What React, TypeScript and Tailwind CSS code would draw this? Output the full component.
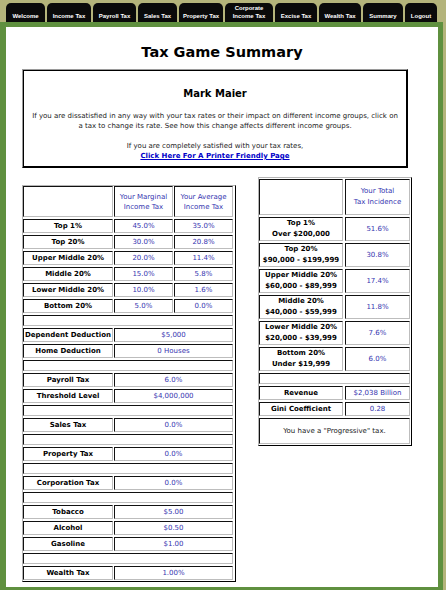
import React from 'react'

type Tab = { label: React.ReactNode; w: string }

const TABS: Tab[] = [
  { label: 'Welcome', w: 'w-[39px]' },
  { label: 'Income Tax', w: 'w-[44px]' },
  { label: 'Payroll Tax', w: 'w-[43px]' },
  { label: 'Sales Tax', w: 'w-[39px]' },
  { label: 'Property Tax', w: 'w-[44px]' },
  {
    label: (
      <>
        Corporate
        <br />
        Income Tax
      </>
    ),
    w: 'w-[48px]',
  },
  { label: 'Excise Tax', w: 'w-[42px]' },
  { label: 'Wealth Tax', w: 'w-[42px]' },
  { label: 'Summary', w: 'w-[40px]' },
  { label: 'Logout', w: 'w-[32px]' },
]

// inset cell like an old border=1 table
const cell =
  'flex items-center justify-center text-center border border-t-[#111] border-l-[#111] border-b-[#bdbdbd] border-r-[#bdbdbd]'
const label = `${cell} font-bold text-black`
const value = `${cell} text-[#3535b0]`

type Row =
  | { kind: 'empty' }
  | { kind: 'income'; name: string; marginal: string; average: string }
  | { kind: 'single'; name: string; val: string }

const LEFT_ROWS: Row[] = [
  { kind: 'income', name: 'Top 1%', marginal: '45.0%', average: '35.0%' },
  { kind: 'income', name: 'Top 20%', marginal: '30.0%', average: '20.8%' },
  { kind: 'income', name: 'Upper Middle 20%', marginal: '20.0%', average: '11.4%' },
  { kind: 'income', name: 'Middle 20%', marginal: '15.0%', average: '5.8%' },
  { kind: 'income', name: 'Lower Middle 20%', marginal: '10.0%', average: '1.6%' },
  { kind: 'income', name: 'Bottom 20%', marginal: '5.0%', average: '0.0%' },
  { kind: 'empty' },
  { kind: 'single', name: 'Dependent Deduction', val: '$5,000' },
  { kind: 'single', name: 'Home Deduction', val: '0 Houses' },
  { kind: 'empty' },
  { kind: 'single', name: 'Payroll Tax', val: '6.0%' },
  { kind: 'single', name: 'Threshold Level', val: '$4,000,000' },
  { kind: 'empty' },
  { kind: 'single', name: 'Sales Tax', val: '0.0%' },
  { kind: 'empty' },
  { kind: 'single', name: 'Property Tax', val: '0.0%' },
  { kind: 'empty' },
  { kind: 'single', name: 'Corporation Tax', val: '0.0%' },
  { kind: 'empty' },
  { kind: 'single', name: 'Tobacco', val: '$5.00' },
  { kind: 'single', name: 'Alcohol', val: '$0.50' },
  { kind: 'single', name: 'Gasoline', val: '$1.00' },
  { kind: 'empty' },
  { kind: 'single', name: 'Wealth Tax', val: '1.00%' },
]

const INCIDENCE = [
  { group: 'Top 1%', range: 'Over $200,000', pct: '51.6%' },
  { group: 'Top 20%', range: '$90,000 - $199,999', pct: '30.8%' },
  { group: 'Upper Middle 20%', range: '$60,000 - $89,999', pct: '17.4%' },
  { group: 'Middle 20%', range: '$40,000 - $59,999', pct: '11.8%' },
  { group: 'Lower Middle 20%', range: '$20,000 - $39,999', pct: '7.6%' },
  { group: 'Bottom 20%', range: 'Under $19,999', pct: '6.0%' },
]

function LeftTable() {
  return (
    <div className="mt-[17px] grid w-[214px] grid-cols-[90px_59px_59px] gap-x-[1px] gap-y-[2px] border border-t-[#b5b5b5] border-l-[#b5b5b5] border-b-black border-r-black pb-[1px] pr-[1px] text-[7px] leading-[10px]">
      <div className={`${cell} h-[31px]`} />
      <div className={`${value} h-[31px]`}>
        Your Marginal
        <br />
        Income Tax
      </div>
      <div className={`${value} h-[31px]`}>
        Your Average
        <br />
        Income Tax
      </div>
      {LEFT_ROWS.map((row, i) => {
        if (row.kind === 'empty') return <div key={i} className={`${cell} col-span-3 h-[11px]`} />
        if (row.kind === 'income')
          return (
            <React.Fragment key={i}>
              <div className={`${label} h-[14px]`}>{row.name}</div>
              <div className={`${value} h-[14px]`}>{row.marginal}</div>
              <div className={`${value} h-[14px]`}>{row.average}</div>
            </React.Fragment>
          )
        return (
          <React.Fragment key={i}>
            <div className={`${label} h-[14px]`}>{row.name}</div>
            <div className={`${value} col-span-2 h-[14px]`}>{row.val}</div>
          </React.Fragment>
        )
      })}
    </div>
  )
}

function RightTable() {
  return (
    <div className="ml-[22px] mt-[9px] grid w-[154px] grid-cols-[84px_65px] gap-[2px] border border-t-[#b5b5b5] border-l-[#b5b5b5] border-b-black border-r-black pb-[1px] pr-[1px] pt-[1px] text-[7px] leading-[11px]">
      <div className={`${cell} h-[36px]`} />
      <div className={`${value} h-[36px]`}>
        Your Total
        <br />
        Tax Incidence
      </div>
      {INCIDENCE.map((r) => (
        <React.Fragment key={r.group}>
          <div className={`${label} h-[24px]`}>
            {r.group}
            <br />
            {r.range}
          </div>
          <div className={`${value} h-[24px]`}>{r.pct}</div>
        </React.Fragment>
      ))}
      <div className={`${cell} col-span-2 h-[11px]`} />
      <div className={`${label} h-[14px]`}>Revenue</div>
      <div className={`${value} h-[14px]`}>$2,038 Billion</div>
      <div className={`${label} h-[14px]`}>Gini Coefficient</div>
      <div className={`${value} h-[14px]`}>0.28</div>
      <div className={`${cell} col-span-2 h-[26px] text-[#222]`}>You have a "Progressive" tax.</div>
    </div>
  )
}

export default function App() {
  return (
    <div className="h-[590px] w-[446px] overflow-hidden bg-[#b4b47b] font-['DejaVu_Sans',Verdana,sans-serif]">
      <nav className="flex h-[22px] items-end gap-[2px] pl-[6px]">
        {TABS.map((t, i) => (
          <div
            key={i}
            className={`${t.w} flex h-[19px] items-end justify-center rounded-t-[5px] bg-[#0a0a0a] pb-[2px] text-center font-['Liberation_Sans',Arial,sans-serif] text-[6px] font-bold leading-[8px] text-white`}
          >
            <span>{t.label}</span>
          </div>
        ))}
      </nav>
      <main className="h-[568px] w-[443px] border-b-[3px] border-l-[6px] border-r-[5px] border-t-[5px] border-[#5f903f] bg-white">
        <h1 className="mt-[16px] text-center text-[14.5px] font-bold leading-[18px] text-black">Tax Game Summary</h1>
        <div className="ml-[16px] w-[390px]">
          <section className="mt-[8px] w-[386px] border border-t-[#9a9a9a] border-l-[#9a9a9a] border-b-black border-r-black">
            <div className="h-[97px] border border-black pt-[17px] text-center text-black">
              <h2 className="text-[10px] font-bold leading-[12px]">Mark Maier</h2>
              <p className="mt-[11px] text-[7px] leading-[10px] text-[#222]">
                If you are dissatisfied in any way with your tax rates or their impact on different income groups, click on
                <br />
                a tax to change its rate. See how this change affects different income groups.
              </p>
              <p className="mt-[10px] text-[7px] leading-[10px] text-[#222]">
                If you are completely satisfied with your tax rates,
                <br />
                <a href="#" className="font-bold text-[#0000c8] underline">
                  Click Here For A Printer Friendly Page
                </a>
              </p>
            </div>
          </section>
          <div className="flex items-start">
            <LeftTable />
            <RightTable />
          </div>
        </div>
      </main>
    </div>
  )
}
